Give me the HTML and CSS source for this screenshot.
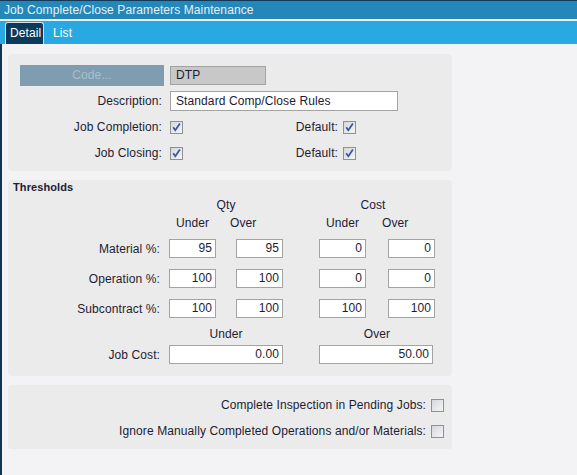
FILE: index.html
```html
<!DOCTYPE html>
<html>
<head>
<meta charset="utf-8">
<link rel="stylesheet" href="styles.css">
</head>
<body>
<div class="app">
  <div class="titlebar">Job Complete/Close Parameters Maintenance</div>
  <div class="sep"></div>
  <div class="tabbar">
    <div class="tab active">Detail</div>
    <div class="tab">List</div>
  </div>
  <div class="content">
    <div class="panel p1">
      <div class="btn">Code...</div>
      <div class="field ro">DTP</div>

      <div class="lbl">Description:</div>
      <div class="field desc">Standard Comp/Close Rules</div>

      <div class="lbl">Job Completion:</div>
      <div class="chkrow">
        <svg class="cb" viewBox="0 0 13 13"><defs><linearGradient id="g1" x1="0" y1="0" x2="1" y2="1"><stop offset="0" stop-color="#d4d6da"/><stop offset="1" stop-color="#f7f7f9"/></linearGradient></defs><rect x="0.5" y="0.5" width="12" height="12" fill="url(#g1)" stroke="#8e9094"/><path d="M3.2 6.3 L5.3 9.2 L9.9 2.6" fill="none" stroke="#3c55a5" stroke-width="1.8"/></svg>
        <div class="lbl dlbl">Default:</div>
        <svg class="cb" viewBox="0 0 13 13"><rect x="0.5" y="0.5" width="12" height="12" fill="url(#g1)" stroke="#8e9094"/><path d="M3.2 6.3 L5.3 9.2 L9.9 2.6" fill="none" stroke="#3c55a5" stroke-width="1.8"/></svg>
      </div>

      <div class="lbl">Job Closing:</div>
      <div class="chkrow">
        <svg class="cb" viewBox="0 0 13 13"><rect x="0.5" y="0.5" width="12" height="12" fill="url(#g1)" stroke="#8e9094"/><path d="M3.2 6.3 L5.3 9.2 L9.9 2.6" fill="none" stroke="#3c55a5" stroke-width="1.8"/></svg>
        <div class="lbl dlbl">Default:</div>
        <svg class="cb" viewBox="0 0 13 13"><rect x="0.5" y="0.5" width="12" height="12" fill="url(#g1)" stroke="#8e9094"/><path d="M3.2 6.3 L5.3 9.2 L9.9 2.6" fill="none" stroke="#3c55a5" stroke-width="1.8"/></svg>
      </div>
    </div>

    <div class="panel p2">
      <div class="ptitle">Thresholds</div>
      <div class="tgrid head">
        <div class="hd qty">Qty</div>
        <div class="hd cost">Cost</div>
        <div class="hd c2">Under</div>
        <div class="hd c4 shift">Over</div>
        <div class="hd c6">Under</div>
        <div class="hd c8 shift">Over</div>
      </div>
      <div class="tgrid rows">
        <div class="tl">Material %:</div>
        <div class="num c2">95</div>
        <div class="num c4">95</div>
        <div class="num c6">0</div>
        <div class="num c8">0</div>

        <div class="tl">Operation %:</div>
        <div class="num c2">100</div>
        <div class="num c4">100</div>
        <div class="num c6">0</div>
        <div class="num c8">0</div>

        <div class="tl">Subcontract %:</div>
        <div class="num c2">100</div>
        <div class="num c4">100</div>
        <div class="num c6">100</div>
        <div class="num c8">100</div>
      </div>
      <div class="tgrid foot">
        <div class="hd qty">Under</div>
        <div class="hd overb">Over</div>
        <div class="tl">Job Cost:</div>
        <div class="num qty">0.00</div>
        <div class="num overb wide">50.00</div>
      </div>
    </div>

    <div class="panel p3">
      <div class="orow">
        <span>Complete Inspection in Pending Jobs:</span>
        <svg class="cb" viewBox="0 0 13 13"><rect x="0.5" y="0.5" width="12" height="12" fill="url(#g1)" stroke="#8e9094"/></svg>
      </div>
      <div class="orow">
        <span>Ignore Manually Completed Operations and/or Materials:</span>
        <svg class="cb" viewBox="0 0 13 13"><rect x="0.5" y="0.5" width="12" height="12" fill="url(#g1)" stroke="#8e9094"/></svg>
      </div>
    </div>
  </div>
</div>
</body>
</html>
```
FILE: styles.css
```css
html, body {
  margin: 0;
  padding: 0;
  width: 577px;
  height: 475px;
  overflow: hidden;
  background: #f3f3f5;
}
.app {
  font-family: "Liberation Sans", Arial, sans-serif;
  font-size: 12px;
  letter-spacing: 0.1px;
  color: #1c1c34;
  display: flex;
  flex-direction: column;
  height: 475px;
}
.titlebar {
  height: 18px;
  border-top: 1px solid #123a57;
  background: #2388b9;
  color: #e8f0f5;
  line-height: 18px;
  padding-left: 4px;
}
.sep {
  height: 2px;
  background: #eef1f3;
}
.tabbar {
  height: 23px;
  background: #29a9e1;
  display: flex;
  align-items: flex-end;
}
.tab {
  color: #ffffff;
  line-height: 21px;
  padding: 0 9px 0 9px;
}
.tab.active {
  margin-left: 5px;
  height: 21px;
  padding: 0 4px 0 4px;
  width: 29px;
  background: #0c3a5b;
  border: 1px solid #d3dee6;
  border-bottom: none;
  border-radius: 3px 3px 0 0;
  text-align: center;
}
.content {
  flex: 1;
  border-left: 2px solid #0f3654;
  padding: 10px 0 0 6px;
  display: flex;
  flex-direction: column;
  gap: 9px;
}
.panel {
  width: 444px;
  background: #ebebeb;
  border-radius: 4px;
  box-sizing: border-box;
}
.p1 {
  padding: 11px 0 8px 12px;
  display: grid;
  grid-template-columns: 144px 1fr;
  column-gap: 6px;
  row-gap: 6px;
  grid-auto-rows: 20px;
  align-items: center;
}
.btn {
  height: 21px;
  background: #7f9db1;
  color: #a9bfcd;
  text-align: center;
  line-height: 21px;
  align-self: start;
}
.field {
  height: 19px;
  box-sizing: border-box;
  border: 1px solid #a3a3a3;
  background: #ffffff;
  line-height: 17px;
  padding-left: 5px;
}
.field.ro {
  width: 96px;
  background: #c8c8c8;
  align-self: start;
  margin-top: 1px;
}
.field.desc {
  width: 228px;
  height: 20px;
  line-height: 18px;
}
.lbl {
  text-align: right;
  padding-right: 2px;
  line-height: 14px;
}
.chkrow {
  display: flex;
  align-items: center;
}
.cb {
  width: 13px;
  height: 13px;
  flex: none;
  display: block;
}
.dlbl {
  width: 155px;
  box-sizing: border-box;
  padding-right: 0;
  margin-right: 5px;
}
.p2 {
  padding: 1px 0 12px 0;
  display: flex;
  flex-direction: column;
}
.ptitle {
  font-size: 11px;
  font-weight: bold;
  line-height: 13px;
  padding-left: 5px;
}
.tgrid {
  display: grid;
  grid-template-columns: 161px 47px 20px 47px 36px 47px 22px 47px;
  align-items: center;
}
.head {
  margin-top: 4px;
  grid-auto-rows: 14px;
  row-gap: 4px;
}
.rows {
  margin-top: 9px;
  grid-auto-rows: 19px;
  row-gap: 11px;
}
.foot {
  margin-top: 9px;
  grid-template-rows: 14px 19px;
  row-gap: 4px;
}
.hd {
  text-align: center;
  line-height: 14px;
}
.qty { grid-column: 2 / 5; }
.cost { grid-column: 6 / 9; padding-right: 8px; }
.overb { grid-column: 6 / 9; }
.c2 { grid-column: 2; }
.c4 { grid-column: 4; }
.c6 { grid-column: 6; }
.c8 { grid-column: 8; }
.hd.c2, .hd.c6 { grid-row: 2; }
.hd.c4, .hd.c8 { grid-row: 2; }
.shift {
  text-align: left;
  margin-left: -6px;
}
.tl {
  grid-column: 1;
  text-align: right;
  padding-right: 9px;
  line-height: 14px;
}
.num {
  height: 19px;
  box-sizing: border-box;
  border: 1px solid #a3a3a3;
  background: #ffffff;
  text-align: right;
  padding-right: 3px;
  line-height: 17px;
}
.num.wide {
  width: 114px;
}
.p3 {
  padding: 13px 8px 11px 0;
  display: flex;
  flex-direction: column;
  align-items: flex-end;
  gap: 12px;
}
.orow {
  display: flex;
  align-items: center;
  gap: 5px;
  height: 14px;
  line-height: 14px;
}
```
